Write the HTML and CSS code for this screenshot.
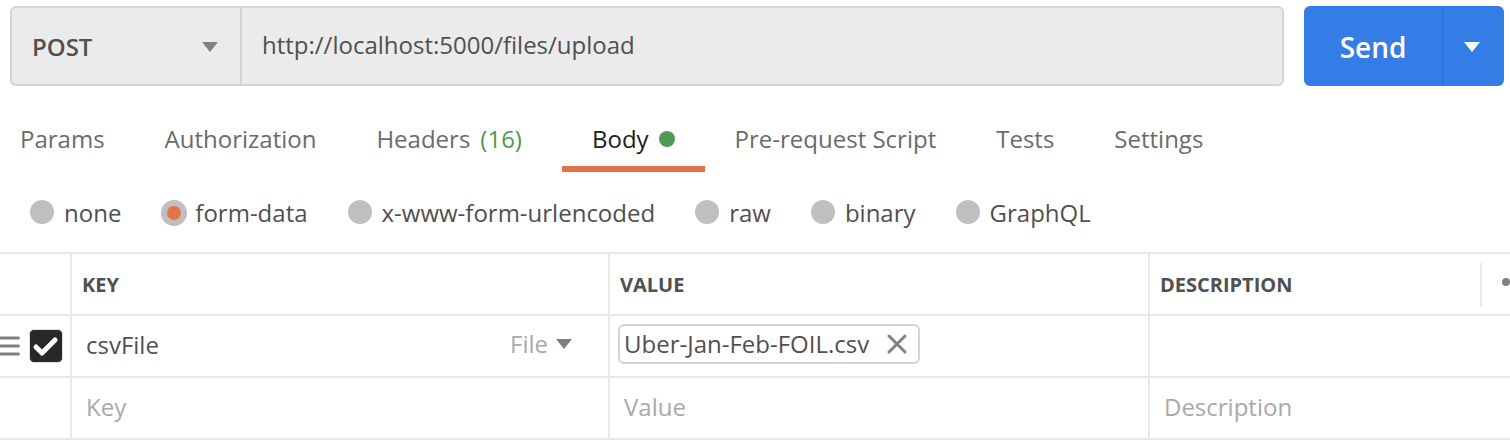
FILE: index.html
```html
<!DOCTYPE html>
<html lang="en">
<head>
<meta charset="utf-8">
<title>Request builder</title>
<link rel="stylesheet" href="styles.css">
</head>
<body>
<form class="request-bar">
  <div class="address">
    <div class="method">
      <select class="method-select" aria-label="Method">
        <option>POST</option>
        <option>GET</option>
        <option>PUT</option>
      </select>
      <svg class="caret" viewBox="0 0 16 10" aria-hidden="true"><path d="M0 0h16L8 10z"/></svg>
    </div>
    <input class="url" type="text" aria-label="Request URL" value="http://localhost:5000/files/upload">
  </div>
  <div class="send-group">
    <button class="send" type="button">Send</button>
    <button class="send-more" type="button" aria-label="Send options">
      <svg class="caret" viewBox="0 0 16 10" aria-hidden="true"><path d="M0 0h16L8 10z"/></svg>
    </button>
  </div>
</form>

<nav class="tabs">
  <a class="tab" href="#params">Params</a>
  <a class="tab" href="#authorization">Authorization</a>
  <a class="tab tab-counted" href="#headers">Headers <span class="count">(16)</span></a>
  <a class="tab tab-active" href="#body">Body <span class="dot"></span></a>
  <a class="tab" href="#prerequest">Pre-request Script</a>
  <a class="tab" href="#tests">Tests</a>
  <a class="tab" href="#settings">Settings</a>
</nav>

<div class="body-types" role="radiogroup" aria-label="Body type">
  <label class="type"><input class="radio" type="radio" name="type">none</label>
  <label class="type"><input class="radio" type="radio" name="type" checked>form-data</label>
  <label class="type"><input class="radio" type="radio" name="type">x-www-form-urlencoded</label>
  <label class="type"><input class="radio" type="radio" name="type">raw</label>
  <label class="type"><input class="radio" type="radio" name="type">binary</label>
  <label class="type"><input class="radio" type="radio" name="type">GraphQL</label>
</div>

<table class="fields">
  <colgroup><col class="col-toggle"><col class="col-key"><col class="col-value"><col></colgroup>
  <thead>
    <tr>
      <th></th>
      <th scope="col">KEY</th>
      <th scope="col">VALUE</th>
      <th scope="col">
        <div class="head-cell">DESCRIPTION
          <button class="more" type="button" aria-label="More options">
            <svg class="more-icon" viewBox="0 0 8 8" aria-hidden="true"><circle cx="4" cy="4" r="4"/></svg>
          </button>
        </div>
      </th>
    </tr>
  </thead>
  <tbody>
    <tr>
      <td>
        <div class="toggle-cell">
          <svg class="handle" viewBox="0 0 20 20" aria-hidden="true"><path d="M-2 2H18.500M-2 10H18.500M-2 18H18.500"/></svg>
          <span class="check">
            <input class="check-input" type="checkbox" aria-label="Include csvFile" checked>
            <svg class="check-mark" viewBox="0 0 34 34" aria-hidden="true"><path d="M7 18L13 24L26 11"/></svg>
          </span>
        </div>
      </td>
      <td>
        <div class="key-cell">
          <input class="cell-input" type="text" aria-label="Key" value="csvFile">
          <div class="kind">
            <select class="kind-select" aria-label="Value type"><option>File</option><option>Text</option></select>
            <svg class="caret" viewBox="0 0 16 10" aria-hidden="true"><path d="M0 0h16L8 10z"/></svg>
          </div>
        </div>
      </td>
      <td>
        <div class="value-cell">
          <span class="chip">Uber-Jan-Feb-FOIL.csv
            <button class="remove" type="button" aria-label="Remove file">
              <svg class="remove-icon" viewBox="0 0 20 20" aria-hidden="true"><path d="M2 2L18 18M18 2L2 18"/></svg>
            </button>
          </span>
        </div>
      </td>
      <td><input class="cell-input" type="text" aria-label="Description"></td>
    </tr>
    <tr>
      <td></td>
      <td><input class="cell-input" type="text" aria-label="New key" placeholder="Key"></td>
      <td><input class="cell-input" type="text" aria-label="New value" placeholder="Value"></td>
      <td><input class="cell-input" type="text" aria-label="New description" placeholder="Description"></td>
    </tr>
  </tbody>
</table>
</body>
</html>
```

FILE: styles.css
```css
* { box-sizing: border-box; }

body {
  margin: 0;
  background: #fff;
  color: #505050;
  font: 24px/32px "Open Sans", "Noto Sans", sans-serif;
  overflow-x: hidden;
}

input, select, button {
  margin: 0;
  padding: 0;
  border: 0;
  background: none;
  color: inherit;
  font: inherit;
  outline: 0;
}

select { appearance: none; }
button { cursor: pointer; }

.caret {
  display: block;
  width: 16px;
  height: 10px;
  fill: #808080;
}

/* Address bar */
.request-bar {
  display: flex;
  gap: 20px;
  padding: 6px 6px 0 10px;
}

.address {
  display: flex;
  flex: 1;
  height: 80px;
  border: 2px solid #d4d4d4;
  border-radius: 6px;
  background: #ebebeb;
}

.method {
  display: grid;
  align-items: center;
  width: 230px;
  border-right: 2px solid #d4d4d4;
}

.method > * { grid-area: 1 / 1; }

.method-select {
  height: 100%;
  padding: 2px 0 0 20px;
  font-weight: 600;
}

.method .caret {
  justify-self: end;
  margin: 2px 22px 0 0;
  pointer-events: none;
}

.url {
  flex: 1;
  min-width: 0;
  padding: 0 20px 2px;
}

.send-group {
  display: flex;
  width: 200px;
  border-radius: 6px;
  overflow: hidden;
  background: #347de7;
  color: #fff;
}

.send {
  flex: 1;
  padding-top: 2px;
  font-size: 28px;
  font-weight: 600;
}

.send-more {
  display: grid;
  place-items: center;
  width: 62px;
  padding: 2px 4px 0 0;
  border-left: 2px solid #2f74d8;
}

.send-more .caret { fill: #fff; }

/* Tabs */
.tabs {
  display: flex;
  margin-left: -10px;
  padding-top: 20px;
}

.tab {
  display: flex;
  align-items: center;
  gap: 10px;
  height: 66px;
  padding: 6px 30px 0;
  border-bottom: 6px solid transparent;
  color: #6b6b6b;
  text-decoration: none;
  white-space: nowrap;
}

.tab-counted { padding-right: 40px; }

.tab-active {
  border-color: #e27248;
  color: #202020;
}

.count { color: #4b9a4f; }

.dot {
  width: 16px;
  height: 16px;
  border-radius: 50%;
  background: #4f9a52;
}

/* Body type */
.body-types {
  display: flex;
  gap: 40px;
  padding: 25px 30px 23px;
}

.type {
  display: flex;
  align-items: center;
  gap: 10px;
  white-space: nowrap;
}

.radio {
  appearance: none;
  width: 24px;
  height: 24px;
  margin-bottom: 2px;
  border-radius: 50%;
  background: #bfbfbf;
}

.radio:checked {
  width: 26px;
  height: 26px;
  margin: 0 -2px 0 0;
  border: 6px solid #bfbfbf;
  background: #e27248;
}

/* Form fields */
.fields {
  width: 100%;
  table-layout: fixed;
  border-collapse: separate;
  border-spacing: 0;
  border-top: 2px solid #e9e9e9;
}

.col-toggle { width: 72px; }
.col-key { width: 35.63%; }
.col-value { width: 35.76%; }

.fields th, .fields td {
  height: 62px;
  padding: 0 0 4px;
  border-right: 2px solid #e9e9e9;
  border-bottom: 2px solid #e9e9e9;
  text-align: left;
  vertical-align: middle;
}

.fields th:last-child, .fields td:last-child { border-right: 0; }

.fields th {
  padding: 2px 0 0 10px;
  font-size: 20px;
  font-weight: 700;
}

.head-cell {
  display: flex;
  align-items: center;
  justify-content: space-between;
}

.more {
  width: 30px;
  height: 44px;
  padding: 0 0 6px 20px;
  border-left: 2px solid #e9e9e9;
}

.more-icon {
  display: block;
  width: 8px;
  height: 8px;
  fill: #808080;
}

.toggle-cell {
  display: flex;
  align-items: center;
  gap: 9px;
  padding-top: 4px;
}

.handle {
  width: 20px;
  height: 20px;
  fill: none;
  stroke: #808080;
  stroke-width: 3;
  stroke-linecap: round;
}

.check {
  display: grid;
  width: 34px;
  height: 34px;
}

.check > * { grid-area: 1 / 1; }

.check-input {
  appearance: none;
  border: 1px solid #e0e0e0;
  border-radius: 5px;
  background: #282828;
}

.check-mark {
  fill: none;
  stroke: #fff;
  stroke-width: 5;
  stroke-linecap: round;
  stroke-linejoin: round;
  pointer-events: none;
}

.cell-input {
  display: block;
  width: 100%;
  min-width: 0;
  height: 44px;
  padding: 0 14px;
}

.cell-input::placeholder {
  color: #a9a9a9;
  opacity: 1;
}

.key-cell {
  display: flex;
  align-items: center;
}

.kind {
  display: grid;
  flex: none;
  align-items: center;
  width: 62px;
  margin-right: 36px;
  color: #a9a9a9;
}

.kind > * { grid-area: 1 / 1; }

.kind .caret {
  justify-self: end;
  pointer-events: none;
}

.value-cell {
  display: flex;
  padding-left: 8px;
}

.chip {
  display: flex;
  align-items: center;
  gap: 18px;
  height: 40px;
  padding: 0 11px 0 4px;
  border: 2px solid #d4d4d4;
  border-radius: 6px;
  white-space: nowrap;
}

.remove-icon {
  display: block;
  width: 20px;
  height: 20px;
  fill: none;
  stroke: #808080;
  stroke-width: 3;
  stroke-linecap: round;
}
```
